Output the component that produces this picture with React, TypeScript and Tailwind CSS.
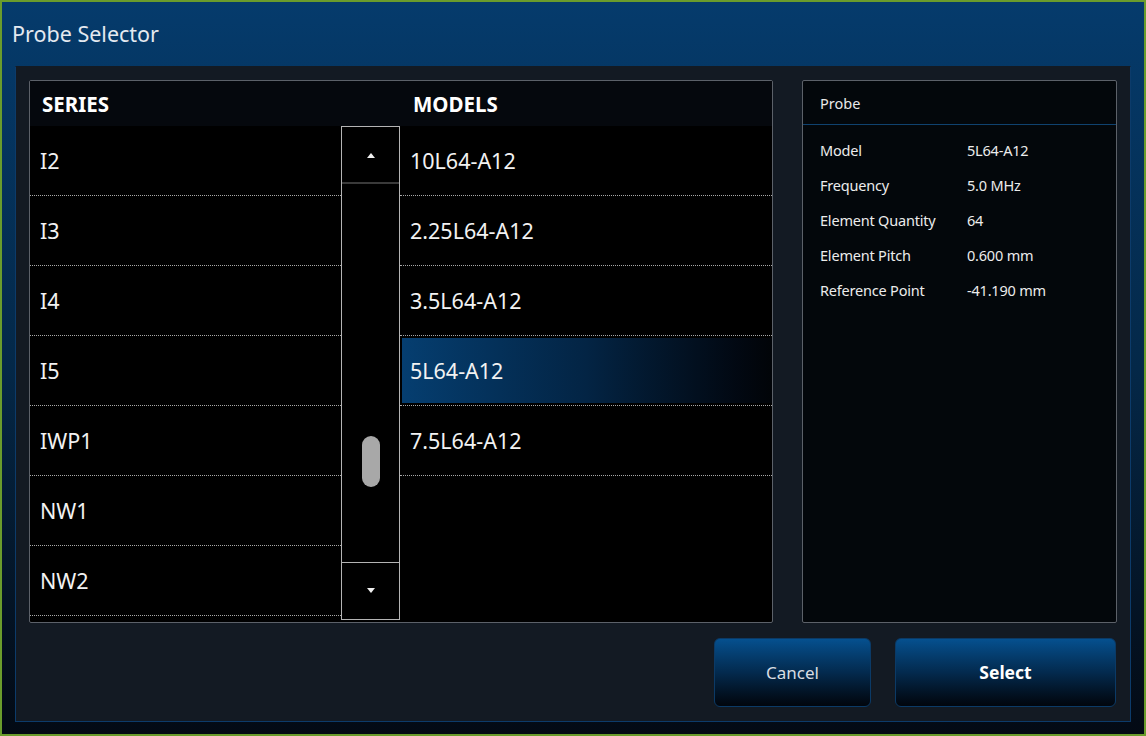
const series = ["I2", "I3", "I4", "I5", "IWP1", "NW1", "NW2"];
const models = ["10L64-A12", "2.25L64-A12", "3.5L64-A12", "5L64-A12", "7.5L64-A12"];
const selectedModel = "5L64-A12";

const details: [string, string][] = [
  ["Model", "5L64-A12"],
  ["Frequency", "5.0 MHz"],
  ["Element Quantity", "64"],
  ["Element Pitch", "0.600 mm"],
  ["Reference Point", "-41.190 mm"],
];

const font = { fontFamily: '"Noto Sans", "Open Sans", "Liberation Sans", sans-serif' };

const ScrollBar = () => (
  <div className="w-[59px] h-[494px] border border-[#b4b4b4] flex flex-col bg-black">
    <div className="h-[57px] flex items-center justify-center border-b-2 border-[#3a3a3a]">
      <svg width="10" height="6" viewBox="0 0 10 6">
        <path d="M1 6 L5 1 L9 6 Z" fill="#f0f0f0" />
      </svg>
    </div>
    <div className="flex-1 flex flex-col items-center">
      <div className="h-[252px]" />
      <div className="w-[18px] h-[51px] rounded-full bg-[#a8a8a8]" />
    </div>
    <div className="h-[57px] flex items-center justify-center border-t border-[#b4b4b4]">
      <svg width="10" height="6" viewBox="0 0 10 6">
        <path d="M1 0 L5 5 L9 0 Z" fill="#f0f0f0" />
      </svg>
    </div>
  </div>
);

export default function App() {
  return (
    <div
      style={font}
      className="w-[1146px] h-[736px] border-2 border-[#6a9c2c] bg-gradient-to-b from-[#053b6c] via-[#042848] to-[#030a14] flex flex-col overflow-hidden"
    >
      <div className="h-[64px] flex items-center pl-[10px]">
        <span className="text-[21.5px] text-[#e4e9f0] leading-none">Probe Selector</span>
      </div>

      <div className="mx-[13px] h-[656px] bg-[#131a23] border border-[#0c3b6a] border-t-[#131a23] flex flex-col px-[13px] pt-[13px] pb-[14px]">
        <div className="flex h-[543px]">
          {/* lists */}
          <div className="w-[744px] h-full border border-[#5c6169] rounded-[2px] bg-black flex flex-col">
            <div className="h-[45px] bg-[#05080d] flex items-center text-white font-bold text-[20.5px] pt-[2px]">
              <div className="w-[371px] pl-[12px]">SERIES</div>
              <div className="pl-[12px]">MODELS</div>
            </div>
            <div className="flex flex-1">
              <div className="w-[311px] flex flex-col">
                {series.map((s) => (
                  <div
                    key={s}
                    className="h-[70px] shrink-0 flex items-center pl-[10px] pt-[1px] text-[21.5px] text-[#f2f2f2] border-b border-dotted border-[#a8a8a8]"
                  >
                    {s}
                  </div>
                ))}
              </div>
              <ScrollBar />
              <div className="flex-1 flex flex-col">
                {models.map((m) => (
                  <div
                    key={m}
                    className="h-[70px] shrink-0 flex items-stretch border-b border-dotted border-[#a8a8a8]"
                  >
                    <div
                      className={
                        m === selectedModel
                          ? "flex-1 my-[2px] ml-[2px] flex items-center pl-[8px] pt-[1px] text-[21.5px] text-[#f2f2f2] bg-gradient-to-r from-[#053e70] via-[#032444] to-[#010408]"
                          : "flex-1 flex items-center pl-[10px] pt-[1px] text-[21.5px] text-[#f2f2f2]"
                      }
                    >
                      {m}
                    </div>
                  </div>
                ))}
              </div>
            </div>
          </div>

          <div className="w-[29px]" />

          {/* details */}
          <div className="w-[315px] h-full border border-[#5c6169] rounded-[2px] bg-[#03070b] flex flex-col">
            <div className="h-[44px] flex items-center pl-[17px] pt-[3px] text-[14.5px] text-[#e8e8e8] border-b border-[#0f426f]">
              Probe
            </div>
            <div className="flex flex-col pt-[8px]">
              {details.map(([k, v]) => (
                <div key={k} className="h-[35px] flex items-center text-[14.5px] text-[#ececec] tracking-[-0.2px]">
                  <div className="w-[164px] pl-[17px]">{k}</div>
                  <div>{v}</div>
                </div>
              ))}
            </div>
          </div>
        </div>

        <div className="flex justify-end gap-[24px] mt-[15px] pr-[1px]">
          <button className="w-[157px] h-[69px] rounded-[6px] border border-[#0b3a66] bg-gradient-to-b from-[#05508f] via-[#032a4e] to-[#01060d] text-[17px] text-[#d8dde3]">
            Cancel
          </button>
          <button className="w-[221px] h-[69px] rounded-[6px] border border-[#0b3a66] bg-gradient-to-b from-[#05508f] via-[#032a4e] to-[#01060d] text-[17.5px] font-bold text-white">
            Select
          </button>
        </div>
      </div>
    </div>
  );
}
